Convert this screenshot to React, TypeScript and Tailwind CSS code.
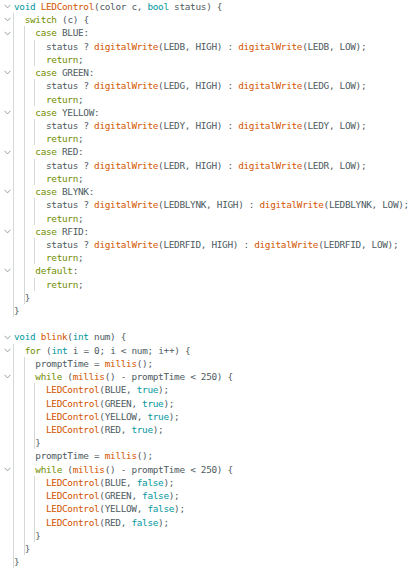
import type { ReactNode } from 'react';

const CODE = `void LEDControl(color c, bool status) {
  switch (c) {
    case BLUE:
      status ? digitalWrite(LEDB, HIGH) : digitalWrite(LEDB, LOW);
      return;
    case GREEN:
      status ? digitalWrite(LEDG, HIGH) : digitalWrite(LEDG, LOW);
      return;
    case YELLOW:
      status ? digitalWrite(LEDY, HIGH) : digitalWrite(LEDY, LOW);
      return;
    case RED:
      status ? digitalWrite(LEDR, HIGH) : digitalWrite(LEDR, LOW);
      return;
    case BLYNK:
      status ? digitalWrite(LEDBLYNK, HIGH) : digitalWrite(LEDBLYNK, LOW);
      return;
    case RFID:
      status ? digitalWrite(LEDRFID, HIGH) : digitalWrite(LEDRFID, LOW);
      return;
    default:
      return;
  }
}

void blink(int num) {
  for (int i = 0; i < num; i++) {
    promptTime = millis();
    while (millis() - promptTime < 250) {
      LEDControl(BLUE, true);
      LEDControl(GREEN, true);
      LEDControl(YELLOW, true);
      LEDControl(RED, true);
    }
    promptTime = millis();
    while (millis() - promptTime < 250) {
      LEDControl(BLUE, false);
      LEDControl(GREEN, false);
      LEDControl(YELLOW, false);
      LEDControl(RED, false);
    }
  }
}`;

// lines that get a fold chevron (0-based)
const FOLDS = [0, 1, 2, 5, 8, 11, 14, 17, 20, 25, 26, 28, 35];

const green = new Set(['switch', 'case', 'return', 'default', 'for', 'while']);
const teal = new Set(['void', 'bool', 'int', 'true', 'false']);
const orange = new Set(['digitalWrite', 'millis', 'LEDControl', 'blink']);

const CHAR = 5.35;

function colorFor(word: string) {
  if (green.has(word)) return 'text-[#728e00]';
  if (teal.has(word)) return 'text-[#00979d]';
  if (orange.has(word)) return 'text-[#d35400]';
  return '';
}

function tokens(line: string): ReactNode[] {
  const parts = line.match(/(\s+|\w+|[^\w\s])/g) ?? [];
  return parts.map((p, i) => {
    const c = colorFor(p);
    return c ? <span key={i} className={c}>{p}</span> : p;
  });
}

function Chevron() {
  return (
    <svg width="7" height="5" viewBox="0 0 7 5" className="block">
      <path d="M0.6 0.8 L3.5 3.9 L6.4 0.8" fill="none" stroke="#8f989c" strokeWidth="0.9" />
    </svg>
  );
}

function CodeLine({ text, fold }: { text: string; fold: boolean }) {
  const indent = text.length - text.trimStart().length;
  const level = indent / 2;
  const closing = text.trim() === '}';
  const guides = text.trim() === '' ? 0 : closing ? level + 1 : level;

  return (
    <div className="flex h-[13.23px] items-center">
      <div className="flex w-[14px] shrink-0 justify-center pl-[1px]">
        {fold && <Chevron />}
      </div>
      <div className="relative h-full flex-1 whitespace-pre">
        {Array.from({ length: guides }).map((_, i) => (
          <div
            key={i}
            className="absolute top-0 bottom-0 w-px bg-[#d6d9da]"
            style={{ left: i * CHAR * 2 - 1 }}
          />
        ))}
        <span className="relative">{tokens(text)}</span>
      </div>
    </div>
  );
}

export default function App() {
  const lines = CODE.split('\n');
  return (
    <div className="h-[573px] w-[420px] overflow-hidden bg-white font-['DejaVu_Sans_Mono',monospace] text-[9.4px] leading-[13.23px] tracking-[-0.31px] text-[#4e5b61]">
      {lines.map((l, i) => (
        <CodeLine key={i} text={l} fold={FOLDS.includes(i)} />
      ))}
    </div>
  );
}
